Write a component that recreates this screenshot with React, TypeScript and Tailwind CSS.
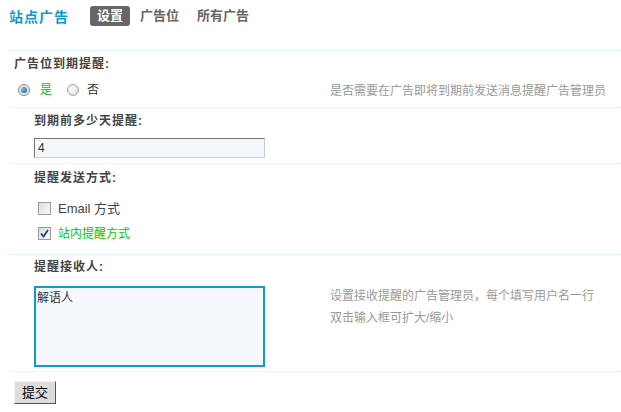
export default function App() {
  const font = "font-['Liberation_Sans','Noto_Sans_CJK_SC',sans-serif]";

  return (
    <div className={`${font} w-[621px] h-[412px] bg-white text-[12px] text-[#333] overflow-hidden`}>
      {/* Header tabs */}
      <div className="h-[50px] flex items-start pl-[9px] pt-[7px]">
        <span className="text-[14px] leading-[20px] font-bold text-[#0b9ad0] tracking-[1px]">站点广告</span>
        <div className="flex items-center ml-[21px] -mt-[1px] text-[13px] font-bold text-[#666]">
          <span className="bg-[#666] text-white rounded-[3px] w-[40px] h-[20px] leading-[20px] text-center">设置</span>
          <span className="ml-[10px] leading-[20px]">广告位</span>
          <span className="ml-[18px] leading-[20px]">所有广告</span>
        </div>
      </div>

      <div className="ml-[9px]">
        {/* Row 1 */}
        <div className="border-t border-dotted border-[#d2eaf8] pt-[6px] pb-[7px]">
          <div className="pl-[5px] font-bold leading-[14px] text-[#444] tracking-[1px]">广告位到期提醒:</div>
          <div className="flex mt-[9px] h-[20px] items-center">
            <div className="w-[321px] flex items-center pl-[9px]">
              <span className="w-[12px] h-[12px] rounded-full border border-[#8a8a8a] bg-[#e8e8e8] flex items-center justify-center">
                <span className="w-[6px] h-[6px] rounded-full bg-[radial-gradient(circle_at_35%_35%,#7fc3f0,#0a4f8a)]" />
              </span>
              <span className="ml-[10px] text-[#00c800] leading-[20px]">是</span>
              <span className="ml-[15px] w-[12px] h-[12px] rounded-full border border-[#a8a8a8] bg-[radial-gradient(circle_at_40%_40%,#ffffff,#d4d4d4)]" />
              <span className="ml-[8px] leading-[20px]">否</span>
            </div>
            <div className="text-[#999] leading-[20px] mt-[2px]">是否需要在广告即将到期前发送消息提醒广告管理员</div>
          </div>
        </div>

        {/* Row 2 */}
        <div className="border-t border-dotted border-[#d2eaf8] pt-[6px] pb-[5px]">
          <div className="pl-[25px] font-bold leading-[14px] text-[#444] tracking-[1px]">到期前多少天提醒:</div>
          <div className="pl-[25px] mt-[10px]">
            <input
              defaultValue="4"
              className="block w-[231px] h-[20px] px-[3px] bg-[#f4f8fd] border border-t-[#777] border-l-[#777] border-r-[#ccc] border-b-[#ccc] text-[12px] text-[#333] outline-none"
            />
          </div>
        </div>

        {/* Row 3 */}
        <div className="border-t border-dotted border-[#d2eaf8] pt-[7px] pb-[8px]">
          <div className="pl-[25px] font-bold leading-[14px] text-[#444] tracking-[1px]">提醒发送方式:</div>
          <div className="mt-[11px] pl-[29px]">
            <div className="h-[25px] flex items-center">
              <span className="w-[13px] h-[13px] border border-[#9a9a9a] bg-[linear-gradient(135deg,#dcdcdc,#fafafa)]" />
              <span className="ml-[7px] text-[#444] text-[13px]">Email 方式</span>
            </div>
            <div className="h-[25px] flex items-center">
              <span className="w-[13px] h-[13px] border border-[#9a9a9a] bg-[linear-gradient(135deg,#dcdcdc,#fafafa)] flex items-center justify-center">
                <svg width="9" height="9" viewBox="0 0 9 9">
                  <path d="M1 4.5 L3.5 7.5 L8 1" stroke="#2a3f8c" strokeWidth="1.8" fill="none" />
                </svg>
              </span>
              <span className="ml-[7px] text-[#00c800]">站内提醒方式</span>
            </div>
          </div>
        </div>

        {/* Row 4 */}
        <div className="border-t border-dotted border-[#d2eaf8] pt-[5px] pb-[4px]">
          <div className="pl-[25px] font-bold leading-[14px] text-[#444] tracking-[1px]">提醒接收人:</div>
          <div className="flex mt-[12px]">
            <div className="w-[321px] pl-[25px]">
              <textarea
                defaultValue="解语人"
                className="block w-[231px] h-[81px] resize-none bg-[#f4f8fd] border-2 border-[#0d9ccf] px-[1px] pt-[1px] text-[12px] leading-[18px] text-[#333] outline-none"
              />
            </div>
            <div className="text-[#999] leading-[22px] -mt-[1px]">
              <div>设置接收提醒的广告管理员，每个填写用户名一行</div>
              <div>双击输入框可扩大/缩小</div>
            </div>
          </div>
        </div>

        <div className="border-t border-dotted border-[#d2eaf8] pt-[9px] pl-[5px]">
          <button className="w-[42px] h-[23px] bg-[#dcdcdc] border border-t-[#f4f4f4] border-l-[#f4f4f4] border-r-[#555] border-b-[#555] text-[13px] text-black leading-[20px]">
            提交
          </button>
        </div>
      </div>
    </div>
  );
}
